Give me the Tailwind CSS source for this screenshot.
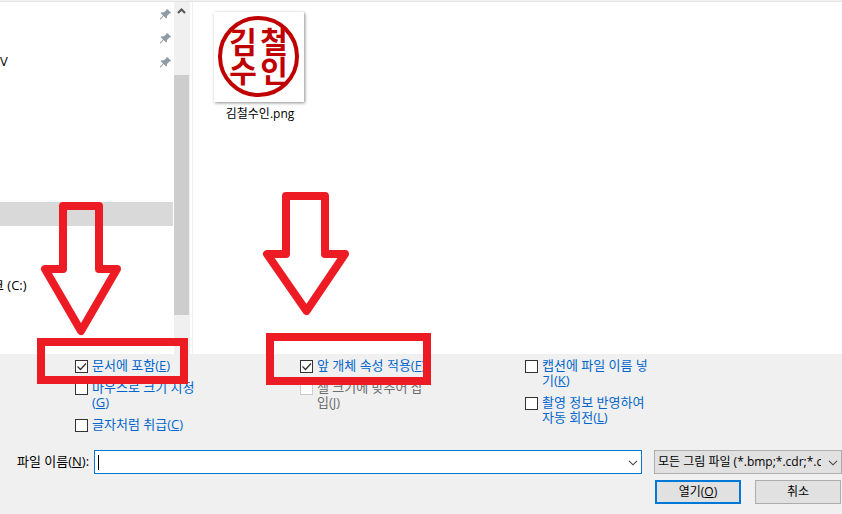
<!doctype html>
<html lang="ko">
<head>
    <meta charset="UTF-8">
    <meta name="viewport" content="width=device-width, initial-scale=1.0">
    <script src="https://cdn.jsdelivr.net/npm/@tailwindcss/browser@4"></script>
    <title>그림 넣기</title>
</head>
<body class="bg-[#f0f0f0] text-black text-[12px] font-['Open_Sans','Noto_Sans_CJK_KR',sans-serif]">
<svg class="hidden">
    <symbol id="pin" viewBox="0 0 11 11">
        <path fill="#8f9ba3" d="M6.3 0.2h1.2l3.2 3v1.2l-1.4.2-2.3 2.3v1.9l-.9.6-2.4-2.3L.8 10.2H0v-.8l3-3L.9 4.2l.7-.9h2.2L6.2 1.500z"/>
    </symbol>
    <symbol id="chevron" viewBox="0 0 10 6">
        <path fill="none" stroke="#444" stroke-width="1.1" d="M1 .8l4 4 4-4"/>
    </symbol>
</svg>
<div class="relative flex flex-col min-h-screen overflow-hidden">
    <div class="h-0.5 border-b border-[#e5e5e5]"></div>
    <main class="flex flex-1 bg-white">
        <nav class="w-[174px] shrink-0 overflow-hidden pr-px">
            <ul>
                <li class="flex h-6 items-center justify-end pr-[2px]">
                    <svg class="size-[11px]"><use href="#pin"/></svg>
                </li>
                <li class="flex h-6 items-center justify-end pr-[2px]">
                    <svg class="size-[11px]"><use href="#pin"/></svg>
                </li>
                <li class="flex h-6 items-center justify-between pr-[2px]">
                    <span class="text-[13px]">V</span>
                    <svg class="size-[11px]"><use href="#pin"/></svg>
                </li>
            </ul>
            <ul class="mt-32">
                <li class="h-6 bg-[#d9d9d9]"></li>
                <li class="h-6"></li>
                <li class="h-6"></li>
                <li class="flex h-6 items-center -ml-2 text-[13px]">크 (C:)</li>
            </ul>
        </nav>
        <div class="flex flex-col w-4 shrink-0 bg-[#f0f0f0]">
            <button aria-label="위로" class="flex h-[73px] justify-center pt-[6px] pr-px">
                <svg class="w-[9px] h-[6px]" viewBox="0 0 9 6"><path fill="none" stroke="#555" stroke-width="2" d="M1 5l3.500-3.500L8 5"/></svg>
            </button>
            <div class="h-60 w-[15px] bg-[#cdcdcd]"></div>
        </div>
        <section class="flex-1 ml-0.5 border-l border-[#f0f0f0] px-4 pt-[10px]">
            <figure class="flex w-[100px] flex-col items-center">
                <svg class="w-[90px] h-[90px] bg-white shadow-[1px_1px_3px_rgba(0,0,0,0.45)]" viewBox="0 0 90 90">
                    <circle cx="44.500" cy="44.500" r="38.500" fill="none" stroke="#c00000" stroke-width="4"/>
                    <g fill="#c00000" font-family="Noto Sans CJK KR" font-weight="700" font-size="30" text-anchor="middle">
                        <text x="29 60" y="41">김철</text>
                        <text x="29 60" y="70">수인</text>
                    </g>
                </svg>
                <figcaption class="mt-1 ml-0.5 leading-4">김철수인.png</figcaption>
            </figure>
        </section>
    </main>

    <footer class="pb-[10px]">
        <div class="grid grid-cols-[225px_225px_225px] pl-[75px] pt-1 text-[13px] leading-[15px] text-[#0066cc]">
            <div class="flex flex-col gap-[7px]">
                <label class="flex w-32 gap-1">
                    <input type="checkbox" checked class="peer appearance-none size-[13px] shrink-0 mt-0.5 border border-[#333] bg-white">
                    <svg class="absolute hidden size-[13px] mt-0.5 peer-checked:block" viewBox="0 0 13 13"><path fill="none" stroke="#333" stroke-width="1.300" d="M2.500 6.500l3 3 5.500-6"/></svg>
                    <span>문서에 포함(<u>E</u>)</span>
                </label>
                <label class="flex w-32 gap-1">
                    <input type="checkbox" class="appearance-none size-[13px] shrink-0 mt-0.5 border border-[#333] bg-white">
                    <span>마우스로 크기 지정<br>(<u>G</u>)</span>
                </label>
                <label class="flex w-32 gap-1">
                    <input type="checkbox" class="appearance-none size-[13px] shrink-0 mt-0.5 border border-[#333] bg-white">
                    <span>글자처럼 취급(<u>C</u>)</span>
                </label>
            </div>
            <div class="flex flex-col gap-[7px]">
                <label class="flex w-36 gap-1">
                    <input type="checkbox" checked class="peer appearance-none size-[13px] shrink-0 mt-0.5 border border-[#333] bg-white">
                    <svg class="absolute hidden size-[13px] mt-0.5 peer-checked:block" viewBox="0 0 13 13"><path fill="none" stroke="#333" stroke-width="1.300" d="M2.500 6.500l3 3 5.500-6"/></svg>
                    <span class="whitespace-nowrap">앞 개체 속성 적용(<u>F</u>)</span>
                </label>
                <label class="flex w-32 gap-1 text-[#6d6d6d]">
                    <input type="checkbox" disabled class="appearance-none size-[13px] shrink-0 mt-0.5 border border-[#ccc] bg-white">
                    <span>셀 크기에 맞추어 삽<br>입(<u>J</u>)</span>
                </label>
            </div>
            <div class="flex flex-col gap-[7px]">
                <label class="flex w-32 gap-1">
                    <input type="checkbox" class="appearance-none size-[13px] shrink-0 mt-0.5 border border-[#333] bg-white">
                    <span>캡션에 파일 이름 넣<br>기(<u>K</u>)</span>
                </label>
                <label class="flex w-32 gap-1">
                    <input type="checkbox" class="appearance-none size-[13px] shrink-0 mt-0.5 border border-[#333] bg-white">
                    <span>촬영 정보 반영하여<br>자동 회전(<u>L</u>)</span>
                </label>
            </div>
        </div>

        <div class="flex items-center pl-[17px] mt-[18px]">
            <label for="file-name" class="w-[77px] whitespace-nowrap text-[13px]">파일 이름(<u>N</u>):</label>
            <div class="relative flex-1">
                <input id="file-name" type="text" class="block w-full h-6 border border-[#0078d7] bg-white px-1 outline-none">
                <span class="absolute left-1 top-[5px] h-[15px] w-px bg-black"></span>
                <svg class="absolute right-1 top-[10px] w-[10px] h-[6px]"><use href="#chevron"/></svg>
            </div>
            <div class="relative w-[188px] ml-3">
                <select aria-label="파일 형식" class="block w-full h-6 appearance-none border border-[#adadad] bg-[#e1e1e1] pl-[3px] pr-5">
                    <option>모든 그림 파일 (*.bmp;*.cdr;*.cgm;*.drw)</option>
                </select>
                <svg class="absolute right-1 top-[10px] w-[10px] h-[6px]"><use href="#chevron"/></svg>
            </div>
        </div>
        <div class="flex justify-end gap-[14px] mt-[6px] pr-px">
            <button class="w-[86px] h-6 border-2 border-[#0078d7] bg-[#e1e1e1]">열기(<u>O</u>)</button>
            <button class="w-[86px] h-6 border border-[#adadad] bg-[#e1e1e1]">취소</button>
        </div>
    </footer>

    <!-- callouts over the dialog -->
    <svg class="absolute left-0 top-0 w-[842px] h-[514px] pointer-events-none" viewBox="0 0 842 514" fill="none" stroke="#ed1c24" stroke-width="8">
        <path stroke-linejoin="round" d="M63 206h36v63h18L81 331 45 269h18z"/>
        <path stroke-linejoin="round" d="M286 196h39v58h20l-38.500 57L267 254h19z"/>
        <rect x="41" y="342" width="143" height="38"/>
        <rect x="270" y="337" width="157" height="44"/>
    </svg>
</div>
</body>
</html>
